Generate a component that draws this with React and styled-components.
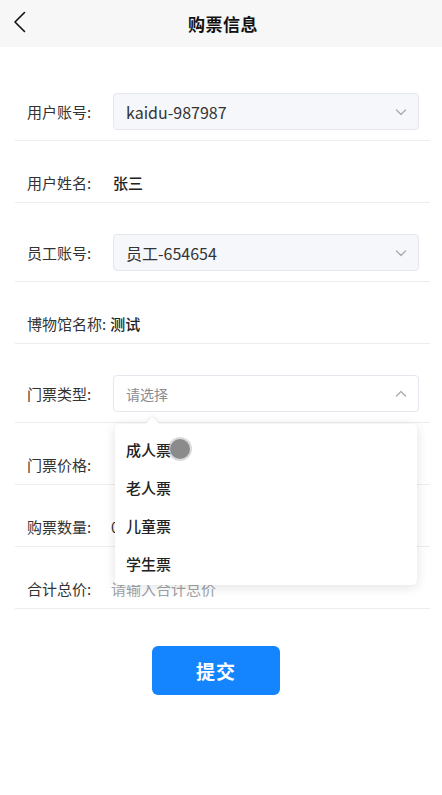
import React from 'react';
import styled, { createGlobalStyle } from 'styled-components';

const GlobalStyle = createGlobalStyle`
  html, body { margin: 0; padding: 0; background: #fff; }
  body {
    font-family: "Noto Sans CJK SC", "Noto Sans", sans-serif;
    color: #333;
    -webkit-font-smoothing: antialiased;
  }
`;

const Page = styled.div`
  width: 442px;
  min-height: 795px;
  background: #fff;
`;

const Header = styled.header`
  position: relative;
  height: 47px;
  background: #f7f7f7;
  display: flex;
  align-items: center;
  justify-content: center;
`;

const BackButton = styled.button`
  position: absolute;
  left: 8px;
  top: 9px;
  width: 24px;
  height: 26px;
  padding: 0;
  border: none;
  background: transparent;
  display: flex;
  align-items: center;
  justify-content: center;
`;

const Title = styled.h1`
  margin: 0;
  font-size: 17px;
  font-weight: 700;
  color: #111;
  letter-spacing: 0.5px;
  transform: translateX(2px);
`;

const Form = styled.div`
  padding: 15px 12px 0 15px;
`;

const Row = styled.div`
  display: flex;
  align-items: center;
  padding: ${({ $select }) => ($select ? '31px 11px 10px 12px' : '31px 11px 9px 12px')};
  border-bottom: 1px solid #ebedf0;
  min-height: ${({ $select }) => ($select ? '37px' : '21px')};
`;

const Label = styled.span`
  flex: ${({ $auto }) => ($auto ? '0 0 auto' : '0 0 86px')};
  margin-right: ${({ $auto }) => ($auto ? '4px' : '0')};
  font-size: 15px;
  line-height: 21px;
  color: #333;
  white-space: nowrap;
`;

const Value = styled.span`
  font-size: 15px;
  line-height: 21px;
  font-weight: 500;
  color: #222;
`;

const SelectWrap = styled.div`
  position: relative;
  flex: 1;
`;

const SelectBox = styled.div`
  height: 37px;
  box-sizing: border-box;
  border: 1px solid #e4e7ed;
  border-radius: 4px;
  background: ${({ $disabled }) => ($disabled ? '#f5f7fa' : '#fff')};
  display: flex;
  align-items: center;
  justify-content: space-between;
  padding: 0 10px 0 12px;
`;

const SelectText = styled.span`
  font-size: ${({ $placeholder }) => ($placeholder ? '14px' : '16px')};
  color: ${({ $placeholder }) => ($placeholder ? '#8a8d93' : '#333')};
`;

const Input = styled.span`
  font-size: 15px;
  line-height: 21px;
  color: ${({ $placeholder }) => ($placeholder ? '#a0a3a8' : '#333')};
  margin-left: -2px;
`;

const Dropdown = styled.div`
  position: absolute;
  left: 2px;
  right: 2px;
  top: calc(100% + 12px);
  background: #fff;
  border-radius: 5px;
  box-shadow: 0 2px 12px rgba(0, 0, 0, 0.12);
  padding: 6px 0 3px;
  z-index: 5;

  &::before {
    content: '';
    position: absolute;
    top: -5px;
    left: 33px;
    width: 9px;
    height: 9px;
    background: #fff;
    transform: rotate(45deg);
    box-shadow: -2px -2px 4px rgba(0, 0, 0, 0.05);
  }
`;

const Option = styled.div`
  position: relative;
  height: 38px;
  display: flex;
  align-items: center;
  padding-left: 11px;
  font-size: 15px;
  font-weight: 500;
  color: #222;
`;

const Touch = styled.span`
  position: absolute;
  left: 55px;
  top: 9px;
  width: 20px;
  height: 20px;
  border-radius: 50%;
  background: #8b8b8b;
  box-shadow: 0 0 0 2px rgba(150, 150, 150, 0.35);
`;

const SubmitWrap = styled.div`
  padding: 37px 0 0 137px;
`;

const Submit = styled.button`
  width: 128px;
  height: 49px;
  border: none;
  border-radius: 6px;
  background: #1485fe;
  color: #fff;
  font-family: inherit;
  font-size: 19px;
  font-weight: 700;
  letter-spacing: 1px;
`;

const Chevron = ({ up }) => (
  <svg width="14" height="14" viewBox="0 0 14 14" fill="none">
    <path
      d={up ? 'M2.5 9L7 4.5L11.5 9' : 'M2.5 5L7 9.5L11.5 5'}
      stroke="#a8abb2"
      strokeWidth="1.3"
      strokeLinecap="round"
      strokeLinejoin="round"
    />
  </svg>
);

const options = ['成人票', '老人票', '儿童票', '学生票'];

export default function App() {
  return (
    <Page>
      <GlobalStyle />
      <Header>
        <BackButton>
          <svg width="14" height="22" viewBox="0 0 14 22" fill="none">
            <path d="M11.5 1.5L2 11L11.5 20.5" stroke="#111" strokeWidth="1.6" strokeLinecap="round" strokeLinejoin="round" />
          </svg>
        </BackButton>
        <Title>购票信息</Title>
      </Header>

      <Form>
        <Row $select>
          <Label>用户账号:</Label>
          <SelectWrap>
            <SelectBox $disabled>
              <SelectText>kaidu-987987</SelectText>
              <Chevron />
            </SelectBox>
          </SelectWrap>
        </Row>

        <Row>
          <Label>用户姓名:</Label>
          <Value>张三</Value>
        </Row>

        <Row $select>
          <Label>员工账号:</Label>
          <SelectWrap>
            <SelectBox $disabled>
              <SelectText>员工-654654</SelectText>
              <Chevron />
            </SelectBox>
          </SelectWrap>
        </Row>

        <Row>
          <Label $auto>博物馆名称:</Label>
          <Value>测试</Value>
        </Row>

        <Row $select>
          <Label>门票类型:</Label>
          <SelectWrap>
            <SelectBox>
              <SelectText $placeholder>请选择</SelectText>
              <Chevron up />
            </SelectBox>
            <Dropdown>
              {options.map((o, i) => (
                <Option key={o}>
                  {o}
                  {i === 0 && <Touch />}
                </Option>
              ))}
            </Dropdown>
          </SelectWrap>
        </Row>

        <Row>
          <Label>门票价格:</Label>
          <Input />
        </Row>

        <Row>
          <Label>购票数量:</Label>
          <Input>0</Input>
        </Row>

        <Row>
          <Label>合计总价:</Label>
          <Input $placeholder>请输入合计总价</Input>
        </Row>

        <SubmitWrap>
          <Submit>提交</Submit>
        </SubmitWrap>
      </Form>
    </Page>
  );
}
